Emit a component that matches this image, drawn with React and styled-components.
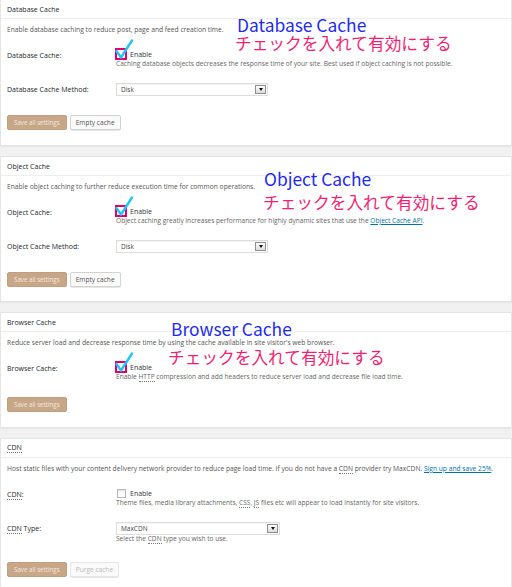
import React from "react";
import styled, { createGlobalStyle } from "styled-components";

const GlobalStyle = createGlobalStyle`
  html, body { margin: 0; padding: 0; background: #f1f1f1; }
  body { font-family: "Open Sans", "Noto Sans", sans-serif; color: #444; }
  * { box-sizing: border-box; }
`;

const Page = styled.div`
  display: flex;
  flex-direction: column;
  gap: 10px;
  margin-top: -1px;
  width: 512px;
`;

const Panel = styled.section`
  position: relative;
  background: #fff;
  border: 1px solid #e5e5e5;
  box-shadow: 0 1px 1px rgba(0, 0, 0, 0.04);
`;

const PanelHeader = styled.h3`
  margin: 0;
  height: 19px;
  padding: 0 6px;
  display: flex;
  align-items: center;
  border-bottom: 1px solid #eeeeee;
  font-size: 7px;
  font-weight: 400;
  color: #23282d;
`;

const PanelBody = styled.div`
  padding: 6px 6px ${(p) => p.$bottom || 14}px;
`;

const Description = styled.p`
  margin: 0;
  font-size: 6.7px;
  line-height: 10px;
  color: #555;
  white-space: nowrap;
`;

const Rows = styled.div`
  margin-top: 13px;
  display: flex;
  flex-direction: column;
  gap: 15px;
`;

const Row = styled.div`
  display: grid;
  grid-template-columns: 109px 1fr;
  align-items: start;
`;

const Label = styled.div`
  font-size: 7px;
  color: #23282d;
  line-height: ${(p) => p.$lh || 12}px;
  padding-top: ${(p) => p.$pt || 0}px;
  white-space: nowrap;
`;

const Field = styled.div`
  display: flex;
  flex-direction: column;
  align-items: flex-start;
`;

const CheckLine = styled.div`
  height: 12px;
  display: flex;
  align-items: center;
  gap: ${(p) => p.$gap || 4}px;
  font-size: 7px;
  color: #32373c;
`;

const Checkbox = styled.span`
  display: inline-block;
  width: 9px;
  height: 9px;
  margin-left: 1px;
  border: 1px solid #b4b9be;
  background: linear-gradient(#f4f4f4, #fff);
  box-shadow: inset 0 1px 1px rgba(0, 0, 0, 0.08);
`;

const MarkedBox = styled.span`
  position: relative;
  display: inline-block;
  width: 12px;
  height: 12px;
  margin-left: -1px;
  border: 2px solid #e4006c;
  background: #fff;
`;

const CheckMark = styled.svg`
  position: absolute;
  left: -2px;
  top: -11px;
  overflow: visible;
`;

const Help = styled.div`
  font-size: 6.6px;
  line-height: 8px;
  color: #666;
  white-space: nowrap;
`;

const SelectBox = styled.div`
  width: ${(p) => p.$w}px;
  height: 13px;
  border: 1px solid #dddddd;
  background: #fff;
  display: flex;
  align-items: center;
  justify-content: space-between;
  padding: 0 1px 0 4px;
  font-size: 6.5px;
  color: #444;
  box-shadow: inset 0 1px 1px rgba(0, 0, 0, 0.05);
`;

const ArrowBox = styled.span`
  width: 11px;
  height: 9px;
  border: 1px solid #8f8f8f;
  background: linear-gradient(#fdfdfd, #dcdcdc);
  display: flex;
  align-items: center;
  justify-content: center;
  &::after {
    content: "";
    border-left: 2.5px solid transparent;
    border-right: 2.5px solid transparent;
    border-top: 3px solid #111;
  }
`;

const Actions = styled.div`
  margin-top: ${(p) => p.$mt || 19}px;
  display: flex;
  gap: 3px;
`;

const Button = styled.button`
  height: 15px;
  padding: 0 ${(p) => (p.$primary ? 6 : 5)}px;
  border-radius: 2px;
  font-family: "Open Sans", "Noto Sans", sans-serif;
  font-size: ${(p) => (p.$primary ? 6.2 : 6.6)}px;
  line-height: 13px;
  cursor: pointer;
  border: 1px solid ${(p) => (p.$primary ? "#c19e80" : p.disabled ? "#e6e6e6" : "#d2d2d2")};
  background: ${(p) => (p.$primary ? "#c8a688" : "#fafafa")};
  color: ${(p) => (p.$primary ? "#f3e9df" : p.disabled ? "#b8b8b8" : "#555")};
  box-shadow: ${(p) => (p.$primary ? "none" : "0 1px 0 #e6e6e6")};
`;

const Abbr = styled.abbr`
  text-decoration: none;
  border-bottom: 1px dotted #777;
`;

const Link = styled.a`
  color: #0073aa;
  text-decoration: underline;
`;

const NoteEn = styled.div`
  position: absolute;
  left: ${(p) => p.$x}px;
  top: ${(p) => p.$y}px;
  font-family: "Noto Sans CJK JP", "Open Sans", sans-serif;
  font-size: 17.4px;
  line-height: 1;
  color: #1e2af2;
  white-space: nowrap;
`;

const NoteJa = styled.div`
  position: absolute;
  left: ${(p) => p.$x}px;
  top: ${(p) => p.$y}px;
  font-family: "Noto Sans CJK JP", sans-serif;
  font-size: 16.7px;
  line-height: 1;
  color: #f01f72;
  white-space: nowrap;
`;

function Marked() {
  return (
    <MarkedBox>
      <CheckMark width="20" height="20" viewBox="0 0 20 20">
        <polyline
          points="1.5,12 6,18.5 17,1.5"
          fill="none"
          stroke="#1fc6f4"
          strokeWidth="2.4"
          strokeLinecap="round"
          strokeLinejoin="round"
        />
      </CheckMark>
    </MarkedBox>
  );
}

function Select({ value, width }) {
  return (
    <SelectBox $w={width}>
      <span>{value}</span>
      <ArrowBox />
    </SelectBox>
  );
}

export default function App() {
  return (
    <>
      <GlobalStyle />
      <Page>
        <Panel>
          <PanelHeader>Database Cache</PanelHeader>
          <PanelBody $bottom={15}>
            <Description>Enable database caching to reduce post, page and feed creation time.</Description>
            <Rows>
              <Row>
                <Label $pt={2}>Database Cache:</Label>
                <Field>
                  <CheckLine $gap={3}>
                    <Marked />
                    Enable
                  </CheckLine>
                  <Help>
                    Caching database objects decreases the response time of your site. Best used if object caching is not possible.
                  </Help>
                </Field>
              </Row>
              <Row>
                <Label $lh={13}>Database Cache Method:</Label>
                <Field>
                  <Select value="Disk" width={152} />
                </Field>
              </Row>
            </Rows>
            <Actions>
              <Button $primary>Save all settings</Button>
              <Button>Empty cache</Button>
            </Actions>
          </PanelBody>
          <NoteEn $x={236} $y={16}>Database Cache</NoteEn>
          <NoteJa $x={234} $y={35}>チェックを入れて有効にする</NoteJa>
        </Panel>

        <Panel>
          <PanelHeader>Object Cache</PanelHeader>
          <PanelBody>
            <Description>Enable object caching to further reduce execution time for common operations.</Description>
            <Rows>
              <Row>
                <Label $pt={2}>Object Cache:</Label>
                <Field>
                  <CheckLine $gap={3}>
                    <Marked />
                    Enable
                  </CheckLine>
                  <Help>
                    Object caching greatly increases performance for highly dynamic sites that use the{" "}
                    <Link href="#">Object Cache API</Link>.
                  </Help>
                </Field>
              </Row>
              <Row>
                <Label $lh={13}>Object Cache Method:</Label>
                <Field>
                  <Select value="Disk" width={152} />
                </Field>
              </Row>
            </Rows>
            <Actions>
              <Button $primary>Save all settings</Button>
              <Button>Empty cache</Button>
            </Actions>
          </PanelBody>
          <NoteEn $x={263} $y={13}>Object Cache</NoteEn>
          <NoteJa $x={262} $y={37}>チェックを入れて有効にする</NoteJa>
        </Panel>

        <Panel>
          <PanelHeader>Browser Cache</PanelHeader>
          <PanelBody $bottom={15}>
            <Description>
              Reduce server load and decrease response time by using the cache available in site visitor's web browser.
            </Description>
            <Rows>
              <Row>
                <Label $pt={2}>Browser Cache:</Label>
                <Field>
                  <CheckLine $gap={3}>
                    <Marked />
                    Enable
                  </CheckLine>
                  <Help>
                    Enable <Abbr>HTTP</Abbr> compression and add headers to reduce server load and decrease file load time.
                  </Help>
                </Field>
              </Row>
            </Rows>
            <Actions $mt={16}>
              <Button $primary>Save all settings</Button>
            </Actions>
          </PanelBody>
          <NoteEn $x={170} $y={7}>Browser Cache</NoteEn>
          <NoteJa $x={167} $y={36}>チェックを入れて有効にする</NoteJa>
        </Panel>

        <Panel>
          <PanelHeader>
            <Abbr>CDN</Abbr>
          </PanelHeader>
          <PanelBody>
            <Description>
              Host static files with your content delivery network provider to reduce page load time. If you do not have a{" "}
              <Abbr>CDN</Abbr> provider try MaxCDN. <Link href="#">Sign up and save 25%</Link>.
            </Description>
            <Rows>
              <Row>
                <Label $pt={2}>
                  <Abbr>CDN</Abbr>:
                </Label>
                <Field>
                  <CheckLine>
                    <Checkbox />
                    Enable
                  </CheckLine>
                  <Help>
                    Theme files, media library attachments, <Abbr>CSS</Abbr>, <Abbr>JS</Abbr> files etc will appear to load
                    instantly for site visitors.
                  </Help>
                </Field>
              </Row>
              <Row>
                <Label $lh={13}>
                  <Abbr>CDN</Abbr> Type:
                </Label>
                <Field>
                  <Select value="MaxCDN" width={164} />
                  <Help>
                    Select the <Abbr>CDN</Abbr> type you wish to use.
                  </Help>
                </Field>
              </Row>
            </Rows>
            <Actions>
              <Button $primary>Save all settings</Button>
              <Button disabled>Purge cache</Button>
            </Actions>
          </PanelBody>
        </Panel>
      </Page>
    </>
  );
}
